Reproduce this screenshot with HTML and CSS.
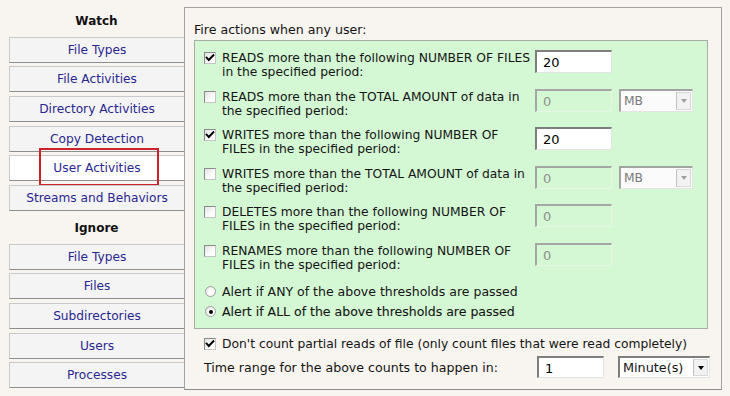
FILE: index.html
```html
<!DOCTYPE html>
<html>
<head>
<meta charset="utf-8">
<link rel="stylesheet" href="styles.css">
</head>
<body>
<div class="app">
  <nav class="side">
    <div class="head head-watch">Watch</div>
    <div class="btn">File Types</div>
    <div class="btn">File Activities</div>
    <div class="btn">Directory Activities</div>
    <div class="btn">Copy Detection</div>
    <div class="btn sel">User Activities<span class="mark"></span></div>
    <div class="btn">Streams and Behaviors</div>
    <div class="head head-ignore">Ignore</div>
    <div class="btn">File Types</div>
    <div class="btn">Files</div>
    <div class="btn">Subdirectories</div>
    <div class="btn">Users</div>
    <div class="btn">Processes</div>
  </nav>
  <section class="panel">
    <div class="title">Fire actions when any user:</div>
    <div class="green">
      <div class="row">
        <span class="cb checked"><svg viewBox="0 0 10 10" width="10" height="10"><polyline points="1.6,4.6 3.8,7 8.4,2.2" /></svg></span>
        <div class="lbl">READS more than the following NUMBER OF FILES<br>in the specified period:</div>
        <div class="inp">20</div>
      </div>
      <div class="row">
        <span class="cb"></span>
        <div class="lbl">READS more than the TOTAL AMOUNT of data in<br>the specified period:</div>
        <div class="inp dis">0</div>
        <div class="dd dd-mb dis"><span class="dd-text">MB</span><span class="dd-btn"><i class="tri"></i></span></div>
      </div>
      <div class="row">
        <span class="cb checked"><svg viewBox="0 0 10 10" width="10" height="10"><polyline points="1.6,4.6 3.8,7 8.4,2.2" /></svg></span>
        <div class="lbl">WRITES more than the following NUMBER OF<br>FILES in the specified period:</div>
        <div class="inp">20</div>
      </div>
      <div class="row">
        <span class="cb"></span>
        <div class="lbl">WRITES more than the TOTAL AMOUNT of data in<br>the specified period:</div>
        <div class="inp dis">0</div>
        <div class="dd dd-mb dis"><span class="dd-text">MB</span><span class="dd-btn"><i class="tri"></i></span></div>
      </div>
      <div class="row">
        <span class="cb"></span>
        <div class="lbl">DELETES more than the following NUMBER OF<br>FILES in the specified period:</div>
        <div class="inp dis">0</div>
      </div>
      <div class="row">
        <span class="cb"></span>
        <div class="lbl">RENAMES more than the following NUMBER OF<br>FILES in the specified period:</div>
        <div class="inp dis">0</div>
      </div>
      <div class="radios">
        <div class="radio-row"><span class="rb"></span><span>Alert if ANY of the above thresholds are passed</span></div>
        <div class="radio-row"><span class="rb on"></span><span class="strong">Alert if ALL of the above thresholds are passed</span></div>
      </div>
    </div>
    <div class="opt">
      <span class="cb checked"><svg viewBox="0 0 10 10" width="10" height="10"><polyline points="1.6,4.6 3.8,7 8.4,2.2" /></svg></span>
      <span>Don't count partial reads of file (only count files that were read completely)</span>
    </div>
    <div class="time">
      <span class="time-lbl">Time range for the above counts to happen in:</span>
      <div class="inp inp-time">1</div>
      <div class="dd dd-time"><span class="dd-text">Minute(s)</span><span class="dd-btn"><i class="tri"></i></span></div>
    </div>
  </section>
</div>
</body>
</html>
```
FILE: styles.css
```css
* { box-sizing: border-box; }
body {
  margin: 0;
  width: 730px;
  height: 396px;
  overflow: hidden;
  background: #f8f4ef;
  font-family: "DejaVu Sans", Verdana, sans-serif;
  font-size: 12px;
  color: #141414;
}
.app { display: flex; align-items: flex-start; }
.side {
  width: 184px;
  flex: none;
  padding-left: 9px;
  display: flex;
  flex-direction: column;
  gap: 3.7px;
}
.head { text-align: center; font-weight: bold; color: #111; }
.head-watch { height: 33px; padding-top: 14px; line-height: 14px; }
.head-ignore { height: 25px; line-height: 26px; }
.btn {
  position: relative;
  height: 26px;
  line-height: 25px;
  font-size: 12.2px;
  text-align: center;
  color: #2a2690;
  background: #f4f4f4;
  border: 1px solid #c9c9c9;
  border-bottom-color: #8e8e8e;
  border-right: none;
  white-space: nowrap;
}
.btn.sel { background: #ffffff; }
.mark {
  position: absolute;
  left: 29px;
  top: -8px;
  width: 120px;
  height: 38px;
  border: 2px solid #cf1f28;
}
.panel {
  margin-top: 7px;
  width: 538px;
  height: 383px;
  flex: none;
  border: 1px solid #a2a2a2;
  border-bottom-color: #8c8c8c;
  padding: 15px 13px 0 9px;
  font-size: 12.3px;
}
.title { line-height: 14px; font-size: 12.6px; }
.green {
  margin-top: 3px;
  background: #d4f8d4;
  border: 1px solid #a6aca6;
  padding: 10px 9px 9px 9px;
}
.row {
  display: flex;
  align-items: flex-start;
  height: 28px;
  margin-bottom: 10.6px;
}
.row:last-of-type { margin-bottom: 0; }
.cb {
  flex: none;
  width: 12px;
  height: 12px;
  margin-top: 1px;
  margin-right: 6px;
  border: 1px solid #8a8a8a;
  border-right-color: #c4c4c4;
  border-bottom-color: #c4c4c4;
  background: linear-gradient(135deg, #e2e2e2, #ffffff 70%);
  display: flex;
  align-items: center;
  justify-content: center;
}
.cb svg polyline { fill: none; stroke: #000; stroke-width: 1.9; stroke-linecap: square; }
.lbl { width: 313px; flex: none; line-height: 14px; white-space: nowrap; }
.inp {
  flex: none;
  width: 77px;
  height: 23px;
  margin-top: -1px;
  padding: 2px 0 0 6px;
  line-height: 18px;
  font-size: 13px;
  background: #ffffff;
  color: #000;
  border: 2px solid #7e7e7e;
  border-right: 1px solid #e4e4e4;
  border-bottom: 1px solid #e4e4e4;
}
.inp.dis { background: transparent; color: #8f8f8f; border-top-color: #a6a6a6; border-left-color: #a6a6a6; border-right-color: #e6f6e6; border-bottom-color: #e6f6e6; }
.dd {
  flex: none;
  position: relative;
  display: flex;
  align-items: center;
  height: 23px;
  margin-top: -1px;
  background: #ffffff;
  border: 2px solid #7e7e7e;
  border-right: 1px solid #e4e4e4;
  border-bottom: 1px solid #e4e4e4;
}
.dd-text { flex: 1; padding-left: 3px; line-height: 18px; font-size: 12.3px; }
.dd-btn {
  flex: none;
  width: 15px;
  height: 18px;
  margin-right: 1px;
  background: #f2f2f2;
  border: 1px solid #d8d8d8;
  border-left-color: #c0c0c0;
  display: flex;
  align-items: center;
  justify-content: center;
}
.tri {
  width: 0;
  height: 0;
  border-left: 3.5px solid transparent;
  border-right: 3.5px solid transparent;
  border-top: 4px solid #000;
}
.dd-mb { width: 74px; margin-left: 7px; background: #fbfbfb; border-top-color: #a3a3a3; border-left-color: #a3a3a3; }
.dd-mb .dd-text { color: #7a7a7a; }
.dd-mb .tri { border-top-color: #a0a0a0; }
.radios { margin-top: 13px; display: flex; flex-direction: column; gap: 6px; font-size: 12.5px; }
.radio-row { display: flex; align-items: center; height: 14px; }
.rb {
  flex: none;
  width: 11px;
  height: 11px;
  margin-left: 1px;
  margin-right: 6px;
  border-radius: 50%;
  border: 1px solid #a0a0a0;
  background: radial-gradient(circle at 60% 60%, #ffffff 30%, #dcdcdc 100%);
  display: flex;
  align-items: center;
  justify-content: center;
}
.rb.on::after {
  content: "";
  width: 4px;
  height: 4px;
  border-radius: 50%;
  background: #000;
}
.strong { -webkit-text-stroke: 0.12px #141414; }
.opt {
  margin-top: 8px;
  padding-left: 10px;
  display: flex;
  align-items: center;
  height: 14px;
  line-height: 14px;
  white-space: nowrap;
}
.opt .cb { margin-top: 0; }
.time {
  margin-top: 5px;
  padding-left: 10px;
  display: flex;
  align-items: center;
  height: 23px;
}
.time-lbl { width: 333px; flex: none; white-space: nowrap; font-size: 12.6px; }
.inp-time { width: 67px; height: 22px; margin-top: 0; }
.dd-time { width: 92px; height: 22px; margin-left: 14px; margin-top: 0; }
.dd-time .dd-text { font-size: 12.8px; }
.dd-time .dd-btn { height: 17px; }
```
